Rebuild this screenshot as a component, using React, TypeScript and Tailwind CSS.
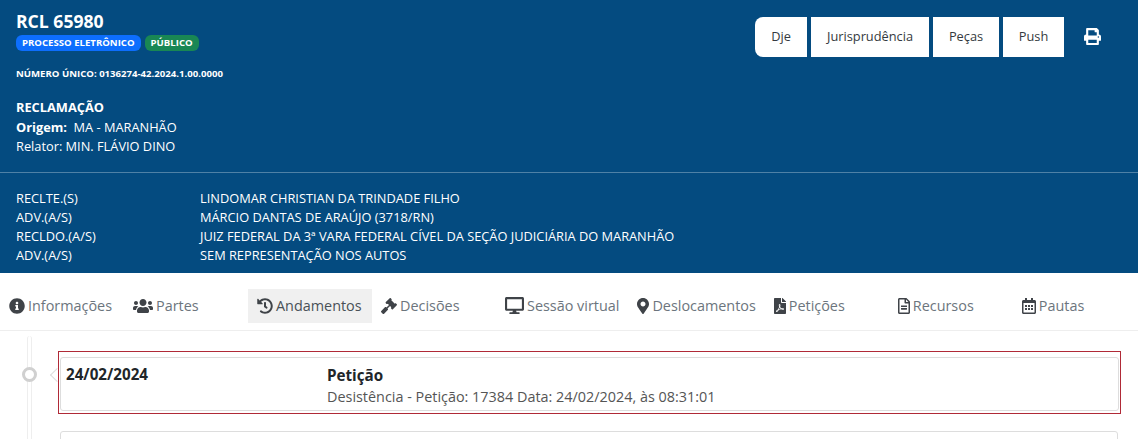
import { FaInfoCircle, FaUsers, FaHistory, FaGavel, FaDesktop, FaMapMarkerAlt, FaFilePdf, FaRegFileAlt, FaRegCalendarAlt, FaPrint } from "react-icons/fa";

const tabs = [
  { label: "Informações", Icon: FaInfoCircle, box: "w-[16px] h-[16px]" },
  { label: "Partes", Icon: FaUsers, box: "w-[20px] h-[16px]" },
  { label: "Andamentos", Icon: FaHistory, box: "w-[16px] h-[16px]" },
  { label: "Decisões", Icon: FaGavel, box: "w-[16px] h-[16px]" },
  { label: "Sessão virtual", Icon: FaDesktop, box: "w-[19px] h-[17px]" },
  { label: "Deslocamentos", Icon: FaMapMarkerAlt, box: "w-[12px] h-[16px]" },
  { label: "Petições", Icon: FaFilePdf, box: "w-[12px] h-[16px]" },
  { label: "Recursos", Icon: FaRegFileAlt, box: "w-[12px] h-[16px]" },
  { label: "Pautas", Icon: FaRegCalendarAlt, box: "w-[14px] h-[16px]" },
];

const parties = [
  ["RECLTE.(S)", "LINDOMAR CHRISTIAN DA TRINDADE FILHO"],
  ["ADV.(A/S)", "MÁRCIO DANTAS DE ARAÚJO (3718/RN)"],
  ["RECLDO.(A/S)", "JUIZ FEDERAL DA 3ª VARA FEDERAL CÍVEL DA SEÇÃO JUDICIÁRIA DO MARANHÃO"],
  ["ADV.(A/S)", "SEM REPRESENTAÇÃO NOS AUTOS"],
];

export default function App() {
  return (
    <div className="h-[439px] w-[1138px] overflow-hidden bg-white font-['Open_Sans',sans-serif] text-[#212529]">
      <header className="h-[273px] bg-[#044b80] px-4 pt-[10px] text-white">
        <div className="flex justify-between">
          <div>
            <h1 className="text-[17.6px] font-bold leading-[22px]">RCL 65980</h1>
            <div className="mt-[3px] flex gap-[4px]">
              <span className="h-4 rounded-[6px] bg-[#0d6efd] px-[6px] text-[9.6px] font-bold leading-4">PROCESSO ELETRÔNICO</span>
              <span className="h-4 rounded-[6px] bg-[#198754] px-[6px] text-[9.6px] font-bold leading-4">PÚBLICO</span>
            </div>
          </div>
          <div className="mr-px mt-[7px] flex items-start text-[12.8px] text-[#343a40]">
            <button className="mr-1 h-10 w-[52px] rounded-l-[8px] bg-white">Dje</button>
            <button className="mr-1 h-10 w-[118px] bg-white">Jurisprudência</button>
            <button className="mr-1 h-10 w-[66px] bg-white">Peças</button>
            <button className="h-10 w-[61px] bg-white">Push</button>
            <FaPrint size={17} className="ml-[20px] mr-[20px] mt-[11px] text-white" />
          </div>
        </div>
        <p className="mt-[10px] text-[9.6px] font-bold leading-[14px]">NÚMERO ÚNICO: 0136274-42.2024.1.00.0000</p>
        <div className="mt-[17px] text-[12.8px] leading-[19.5px]">
          <p className="font-bold">RECLAMAÇÃO</p>
          <p><b>Origem:</b>&nbsp; MA - MARANHÃO</p>
          <p>Relator: MIN. FLÁVIO DINO</p>
        </div>
        <hr className="mx-[-16px] mt-[15px] border-t border-[#fff]/30" />
        <div className="mt-[16px] text-[12.8px] leading-[19px]">
          {parties.map(([role, name], i) => (
            <div key={i} className="flex">
              <span className="w-[184px]">{role}</span>
              <span>{name}</span>
            </div>
          ))}
        </div>
      </header>

      <nav className="flex h-[58px] items-center border-b border-[#eeeeee] pt-[8px] text-[14.4px] text-[#6c757d]">
        {tabs.map(({ label, Icon, box }) => (
          <div key={label} className={`flex h-[34px] min-w-[124px] items-center gap-[3px] whitespace-nowrap px-[9px] ${label === "Andamentos" ? "bg-[#f0f0f0] text-[#495057]" : ""}`}>
            <Icon className={`shrink-0 text-[#3f4348] ${box}`} />
            <span>{label}</span>
          </div>
        ))}
      </nav>

      <main className="flex pl-[27px] pt-[5px]">
        <div className="w-[5px] self-stretch rounded-full border-x border-[#eeeeee] bg-white" />
        <div className="relative ml-[26px] mr-[17px] flex-1 pt-[15px]">
          <span className="absolute left-[-36px] top-[31px] h-[15px] w-[15px] rounded-full border-[3px] border-[#d0d0d0] bg-white" />
          <span className="absolute left-[-6px] top-[34px] h-[10px] w-[10px] rotate-45 border-b border-l border-[#dddddd] bg-white" />
          <div className="relative border border-[#b02a37] px-[1px] pb-[2px] pt-[5px]">
            <div className="flex h-[54px] rounded-[3px] border border-[#dddddd] bg-white pl-[5px]">
              <div className="w-[261px] pt-[6px] text-[15.2px] font-bold leading-[20px]">24/02/2024</div>
              <div className="pt-[7px]">
                <p className="text-[15.2px] font-bold leading-[20px]">Petição</p>
                <p className="mt-[2px] text-[14.4px] leading-[20px] text-[#555555]">Desistência - Petição: 17384 Data: 24/02/2024, às 08:31:01</p>
              </div>
            </div>
          </div>
          <div className="ml-[2px] mr-[3px] mt-[17px] h-[40px] rounded-[3px] border border-[#dddddd]" />
        </div>
      </main>
    </div>
  );
}
